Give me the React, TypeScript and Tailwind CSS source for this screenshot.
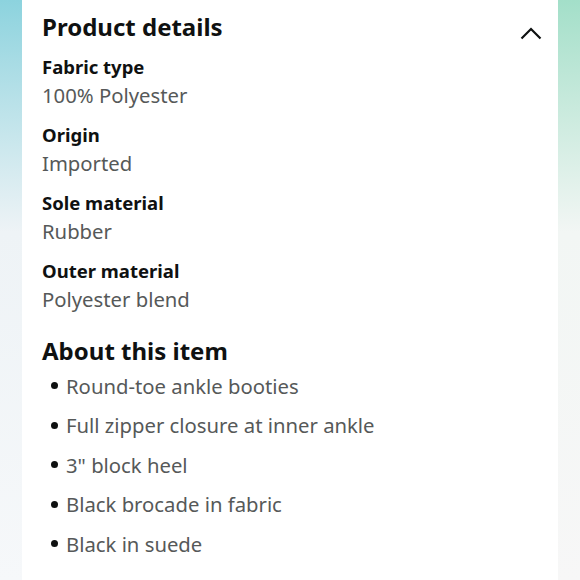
const details = [
  { label: 'Fabric type', value: '100% Polyester' },
  { label: 'Origin', value: 'Imported' },
  { label: 'Sole material', value: 'Rubber' },
  { label: 'Outer material', value: 'Polyester blend' },
]

const bullets = [
  'Round-toe ankle booties',
  'Full zipper closure at inner ankle',
  '3" block heel',
  'Black brocade in fabric',
  'Black in suede',
]

export default function App() {
  return (
    <div className="flex h-[580px] w-[580px] overflow-hidden bg-white font-['Noto_Sans',sans-serif]">
      {/* left backdrop */}
      <div className="w-[22px] shrink-0 bg-gradient-to-b from-[#8cd3de] via-[#eef3f6] via-40% to-[#f6f8fa]" />

      {/* card */}
      <div className="flex-1 bg-white pl-5 pr-[16px] pt-[10px]">
        <div className="flex items-center justify-between">
          <h2 className="text-[24px] font-bold leading-[34px] text-[#0f1111]">Product details</h2>
          <svg width="22" height="13" viewBox="0 0 22 13" className="mr-0 mt-[12px]" fill="none">
            <polyline points="1.5,11.5 11,2 20.5,11.5" stroke="#0f1111" strokeWidth="2.2" />
          </svg>
        </div>

        <div className="mt-[9px]">
          {details.map((d) => (
            <div key={d.label} className="mb-[12px]">
              <div className="text-[18.5px] font-bold leading-[28px] text-[#0f1111]">{d.label}</div>
              <div className="text-[20.3px] leading-[28px] text-[#565959]">{d.value}</div>
            </div>
          ))}
        </div>

        <h2 className="mt-[21px] text-[24px] font-bold leading-[34px] text-[#0f1111]">About this item</h2>

        <ul className="-mt-[2px]">
          {bullets.map((b) => (
            <li key={b} className="flex h-[39.5px] items-center">
              <span className="ml-[9px] mr-[8px] h-[7px] w-[7px] rounded-full bg-[#0f1111]" />
              <span className="text-[20.3px] text-[#565959]">{b}</span>
            </li>
          ))}
        </ul>
      </div>

      {/* right backdrop */}
      <div className="w-[22px] shrink-0 bg-gradient-to-b from-[#a3dfc9] via-[#f2f6f4] via-40% to-[#f7f7f7]" />
    </div>
  )
}
